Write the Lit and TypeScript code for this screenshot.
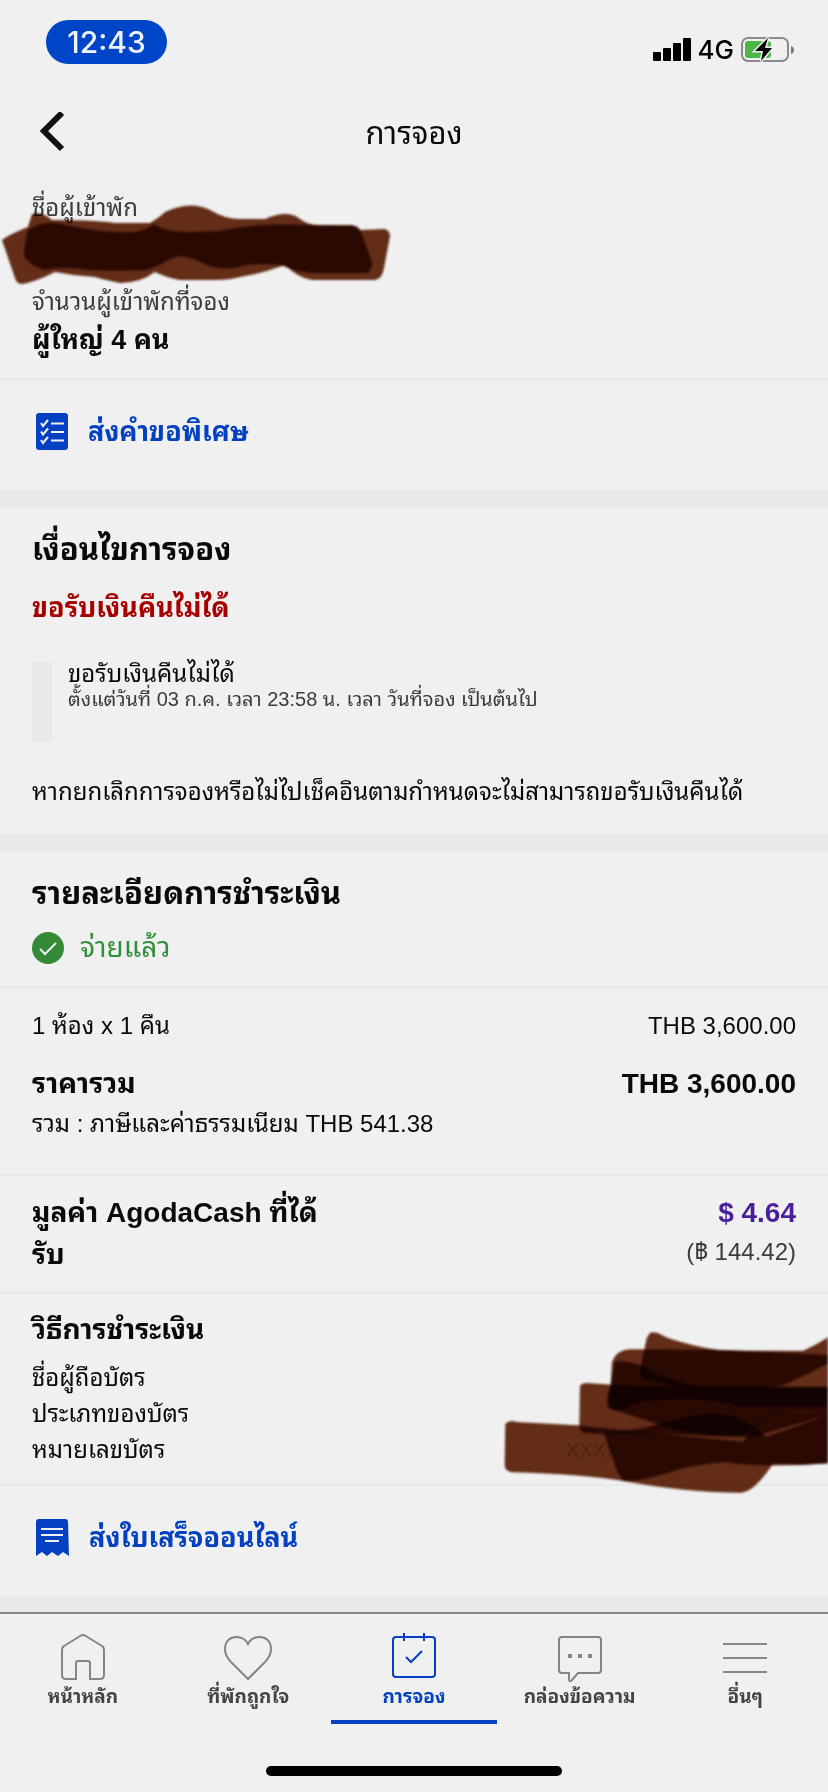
import { LitElement, html, css, svg, nothing } from "lit";
import type { SVGTemplateResult } from "lit";
import { customElement } from "lit/decorators.js";

interface Tab {
  label: string;
  icon: SVGTemplateResult;
  active?: boolean;
}

const TABS: Tab[] = [
  {
    label: "หน้าหลัก",
    icon: svg`<path d="M17 47H7q-4 0-4-4V18q0-3 2-4L22 3.500q2-1 4 0L43 14q2 1 2 4V43q0 4-4 4H31V31q0-2-2-2H19q-2 0-2 2z" />`,
  },
  {
    label: "ที่พักถูกใจ",
    icon: svg`<path d="M24 47 7 30C2 25 1 21 1 17 1 9 6 5 12.500 5 18 5 22 8 24 12 26 8 30 5 35.500 5 42 5 47 9 47 17c0 4-1 8-6 13z" />`,
  },
  {
    label: "การจอง",
    active: true,
    icon: svg`<rect x="3" y="5" width="42" height="40" rx="3" /><path d="M14 1v8M34 1v8M16 25l5 5 11-11" />`,
  },
  {
    label: "กล่องข้อความ",
    icon: svg`<path d="M6 5H42q3 0 3 3V38q0 3-3 3H22l-6 7q-3 3-3-1V41H6q-3 0-3-3V8q0-3 3-3z" /><path class="dots" d="M12 22h4v4h-4zM22 22h4v4h-4zM32 22h4v4h-4z" />`,
  },
  {
    label: "อื่นๆ",
    icon: svg`<path d="M2 12H46M2 26H46M2 40H46" />`,
  },
];

@customElement("app-root")
export class AppRoot extends LitElement {
  static styles = css`
    :host {
      display: block;
      min-height: 100vh;
      background: #f0f0f0;
      color: #0a0a0a;
      font-family: "Liberation Sans", "Noto Sans Thai Looped", "Loma", sans-serif;
      font-size: 24px;
      line-height: 36px;
    }
    h1, h2, h3, p, dl, dt, dd { margin: 0; font-size: inherit; font-weight: inherit; }
    a { color: inherit; text-decoration: none; }
    button { padding: 0; border: 0; background: none; font: inherit; color: inherit; cursor: pointer; }
    svg { display: block; flex: none; }

    .status {
      display: flex;
      justify-content: space-between;
      align-items: flex-start;
      height: 70px;
      padding: 20px 34px 0 46px;
      font-family: "Inter", "Liberation Sans", sans-serif;
      font-weight: 500;
    }
    .clock {
      width: 121px;
      border-radius: 22px;
      background: #0045c8;
      color: #eef4ff;
      font-size: 30px;
      line-height: 44px;
      text-align: center;
    }
    .signals { display: flex; align-items: center; gap: 7px; margin-top: 14px; font-size: 26px; line-height: 32px; color: #000; }

    .header {
      display: grid;
      grid-template-columns: 48px 1fr 48px;
      align-items: center;
      height: 88px;
      padding: 0 32px;
    }
    .title { font-size: 31px; line-height: 40px; text-align: center; }

    section { position: relative; padding: 0 32px; }
    .line { border-bottom: 2px solid #e8e8e8; }
    .band { height: 18px; background: #e9e9e9; }
    .band.last { height: 16px; }
    .grey { color: #3c3c3c; }
    .strong { font-size: 28px; line-height: 40px; font-weight: 700; }
    .strong.compact { font-size: 27px; }
    .heading { font-size: 31px; line-height: 44px; font-weight: 700; }

    .guests { padding-top: 12px; padding-bottom: 18px; }
    .name { height: 58px; }
    .scribble { position: absolute; mix-blend-mode: multiply; pointer-events: none; filter: blur(1px); }
    .scribble path { fill: #692f18; mix-blend-mode: multiply; }
    .scribble.guest { left: 0; top: 22px; }
    .scribble.card { right: 0; top: 36px; }

    .action {
      display: flex;
      align-items: center;
      gap: 20px;
      padding: 32px 36px 38px;
      color: #0341c2;
    }

    .terms { padding-top: 20px; padding-bottom: 24px; }
    .terms .red { margin-top: 16px; color: #a60000; }
    .policy { display: flex; height: 80px; margin: 34px 0 32px; }
    .policy::before { content: ""; width: 20px; margin-right: 16px; background: #e9e9e9; }
    .policy p { line-height: 24px; }
    .policy .note { font-size: 20px; line-height: 26px; color: #3c3c3c; }

    .paid-block { padding-top: 20px; padding-bottom: 22px; }
    .paid { display: flex; align-items: center; gap: 16px; margin-top: 16px; font-size: 28px; line-height: 32px; color: #2f8f3a; }

    .pair { display: flex; justify-content: space-between; }
    .price { padding-top: 20px; padding-bottom: 32px; }
    .price .total { margin: 20px 0 2px; }
    .cash { padding-top: 16px; padding-bottom: 16px; }
    .cash .strong { line-height: 42px; }
    .amount { text-align: right; }
    .purple { color: #4b1f9c; }
    .method { padding-top: 16px; padding-bottom: 16px; }
    .method dl { margin-top: 10px; }
    .method dd { width: 230px; color: #b8b8b8; font-size: 20px; }

    .tabs {
      display: grid;
      grid-template-columns: repeat(5, 1fr);
      border-top: 2px solid #858585;
      font-size: 19px;
      line-height: 28px;
      font-weight: 700;
      color: #444;
    }
    .tab {
      display: flex;
      flex-direction: column;
      align-items: center;
      padding: 18px 0 9px;
      border-bottom: 4px solid transparent;
      white-space: nowrap;
    }
    .tab svg { margin-bottom: 1px; fill: none; stroke: #858585; stroke-width: 2px; overflow: visible; }
    .tab .dots { fill: #858585; stroke: none; }
    .tab.on { border-color: #0341c2; color: #0341c2; }
    .tab.on svg { stroke: #0341c2; }
    .home-bar { width: 296px; height: 10px; margin: 42px auto 0; border-radius: 5px; background: #000; }
  `;

  render() {
    return html`
      <div class="status">
        <div class="clock">12:43</div>
        <div class="signals">
          <svg width="38" height="24" viewBox="0 0 38 24">
            <rect y="14" width="8" height="9" rx="1" />
            <rect x="10" y="10" width="8" height="13" rx="1" />
            <rect x="20" y="5" width="8" height="18" rx="1" />
            <rect x="30" width="8" height="23" rx="1" />
          </svg>
          <span>4G</span>
          <svg width="53" height="26" viewBox="0 0 53 26">
            <rect x="1" y="1" width="46" height="23" rx="6" fill="none" stroke="#8a8a8a" stroke-width="2" />
            <rect x="4" y="4" width="26" height="17" rx="3" fill="#4cb748" />
            <path d="M50 9q3 1 3 4t-3 4z" fill="#777" />
            <path d="M27 1 14 14h8L20 24 31 11h-7z" stroke="#f0f0f0" stroke-width="3" />
            <path d="M27 1 14 14h8L20 24 31 11h-7z" />
          </svg>
        </div>
      </div>

      <header class="header">
        <button aria-label="ย้อนกลับ">
          <svg width="40" height="44" viewBox="0 0 40 44"><path d="M30 1 12 19 30 37" fill="none" stroke="#111" stroke-width="6" /></svg>
        </button>
        <h1 class="title">การจอง</h1>
      </header>
      <main>
        <section class="guests line">
          <p class="grey">ชื่อผู้เข้าพัก</p>
          <div class="name"></div>
          <p class="grey">จำนวนผู้เข้าพักที่จอง</p>
          <p class="strong compact">ผู้ใหญ่ 4 คน</p>
          <svg class="scribble guest" width="400" height="90" viewBox="0 200 400 90">
            <path d="M2 240Q10 234 28 227L32 214Q42 211 52 220Q95 220 115 223L150 223Q160 217 165 212Q190 200 210 210Q225 219 240 219L265 219Q288 209 300 219Q308 225 320 225L352 225Q358 226 360 230L385 229Q390 231 390 236L384 268Q382 280 374 280L312 280Q298 278 285 265Q260 274 240 277Q230 280 215 280L180 280Q165 277 155 272Q140 283 120 283Q105 280 95 277Q75 276 55 272Q35 282 22 284Q17 284 15 278Z" />
            <path d="M28 230Q45 220 62 224Q105 234 135 232Q146 230 154 224Q165 232 190 232L220 231Q250 223 310 225L352 226Q358 226 361 232L372 262Q372 272 366 273L312 273Q298 272 280 265Q255 262 235 268Q215 270 200 262Q182 252 168 260Q156 268 145 270Q120 271 90 270Q60 266 45 270Q30 266 24 256Q24 245 28 230Z" />
          </svg>
        </section>

        <a class="action strong compact" href="#request">
          <svg width="32" height="38" viewBox="0 0 32 38">
            <rect width="32" height="37" rx="3" fill="currentColor" />
            <path d="M5 10l2 3 5-6M5 18.500l2 3 5-6M5 27l2 3 5-6M15 10.500H28M15 19H28M15 27.500H28" fill="none" stroke="#f0f0f0" stroke-width="2" />
          </svg>
          <span>ส่งคำขอพิเศษ</span>
        </a>
        <div class="band"></div>

        <section class="terms">
          <h2 class="heading">เงื่อนไขการจอง</h2>
          <p class="strong compact red">ขอรับเงินคืนไม่ได้</p>
          <div class="policy">
            <div>
              <p>ขอรับเงินคืนไม่ได้</p>
              <p class="note">ตั้งแต่วันที่ 03 ก.ค. เวลา 23:58 น. เวลา วันที่จอง เป็นต้นไป</p>
            </div>
          </div>
          <p>หากยกเลิกการจองหรือไม่ไปเช็คอินตามกำหนดจะไม่สามารถขอรับเงินคืนได้</p>
        </section>
        <div class="band"></div>

        <section class="paid-block line">
          <h2 class="heading">รายละเอียดการชำระเงิน</h2>
          <p class="paid">
            <svg width="32" height="32" viewBox="0 0 32 32">
              <circle cx="16" cy="16" r="16" fill="#358a38" />
              <path d="M8 17l5 5L24 11" fill="none" stroke="#f0f0f0" stroke-width="2" />
            </svg>
            <span>จ่ายแล้ว</span>
          </p>
        </section>

        <section class="price line">
          <div class="pair"><span>1 ห้อง x 1 คืน</span><span>THB 3,600.00</span></div>
          <div class="pair strong total"><span>ราคารวม</span><span>THB 3,600.00</span></div>
          <p>รวม : ภาษีและค่าธรรมเนียม THB 541.38</p>
        </section>

        <section class="cash line pair">
          <p class="strong">มูลค่า AgodaCash ที่ได้<br />รับ</p>
          <div class="amount">
            <p class="strong purple">$ 4.64</p>
            <p class="grey">(฿ 144.42)</p>
          </div>
        </section>

        <section class="method line">
          <h3 class="strong">วิธีการชำระเงิน</h3>
          <dl>
            <div class="pair"><dt>ชื่อผู้ถือบัตร</dt><dd></dd></div>
            <div class="pair"><dt>ประเภทของบัตร</dt><dd></dd></div>
            <div class="pair"><dt>หมายเลขบัตร</dt><dd>XXXX</dd></div>
          </dl>
          <svg class="scribble card" width="328" height="166" viewBox="60 90 984 498">
            <path d="M510 98Q525 94 540 102Q560 115 590 122Q680 148 740 152L970 152Q1010 135 1044 112V190Q960 235 910 255Q800 275 700 262Q560 262 490 235Q476 225 482 200L500 115Z" />
            <path d="M396 185Q410 150 450 148L740 150L1044 165V320L770 320Q700 290 540 300Q470 300 440 325Q400 335 385 325Q376 300 392 255Z" />
            <path d="M300 258Q308 246 330 250L420 256Q700 262 1044 260V345L820 410Q700 412 620 405L450 400Q380 404 310 398Q296 390 298 370Z" />
            <path d="M405 185Q440 180 490 200Q560 240 650 258L1044 262V335Q900 330 860 345Q820 400 780 408Q600 400 540 375Q440 340 400 330Q376 315 392 255Z" />
            <path d="M76 372Q88 358 110 366L290 376Q500 400 790 425Q840 350 880 335L1044 335V490L960 495L880 490Q820 580 780 578Q620 578 430 543Q300 522 100 517Q72 515 74 490Z" />
            <path d="M370 397Q480 392 540 370Q680 330 740 345Q790 350 860 410L1044 345V490L960 495Q800 500 740 487Q650 490 560 520Q480 545 430 543Q410 520 400 480Z" />
          </svg>
        </section>

        <a class="action strong compact" href="#receipt">
          <svg width="33" height="38" viewBox="0 0 33 38">
            <path d="M3 0H29q3 0 3 3L33 37 27 33 22 37 16 33 11 37 6 33 0 37V3q0-3 3-3z" fill="currentColor" />
            <path d="M5 10H27M5 16H27M9 22H23" stroke="#f0f0f0" stroke-width="2" />
          </svg>
          <span>ส่งใบเสร็จออนไลน์</span>
        </a>
        <div class="band last"></div>
      </main>

      <nav class="tabs">
        ${TABS.map(
          (tab) => html`
            <a class="tab ${tab.active ? "on" : ""}" href="#" aria-current=${tab.active ? "page" : nothing}>
              <svg width="48" height="50" viewBox="0 0 48 50">${tab.icon}</svg>
              <span>${tab.label}</span>
            </a>
          `,
        )}
      </nav>
      <div class="home-bar"></div>
    `;
  }
}
